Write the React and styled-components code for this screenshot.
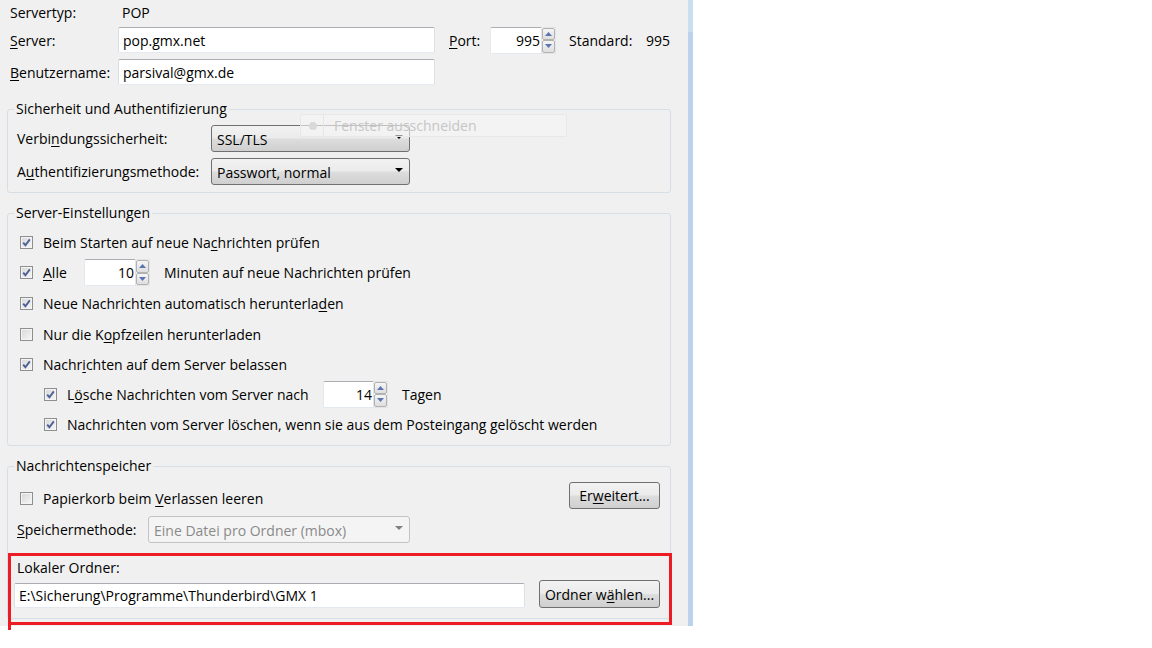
import React from 'react';
import styled, { createGlobalStyle } from 'styled-components';

const FONT = '"Open Sans", "Segoe UI", sans-serif';

const Global = createGlobalStyle`
  html, body { margin: 0; padding: 0; background: #fff; }
  body { font-family: ${FONT}; font-size: 14px; color: #000; }
`;

const Screen = styled.div`
  position: relative;
  display: flex;
  align-items: flex-start;
  width: 1152px;
  height: 648px;
  overflow: hidden;
`;

const Panel = styled.div`
  position: relative;
  width: 688px;
  height: 626px;
  background: #f0f0f0;
  display: flex;
  flex-direction: column;
  overflow: hidden;
`;

const ScrollStrip = styled.div`
  width: 5px;
  height: 626px;
  background: linear-gradient(#cbddf1 0, #cbddf1 32px, #bbd2ea 32px);
`;

const Row = styled.div`
  display: flex;
  align-items: ${p => p.$align || 'center'};
  justify-content: ${p => p.$justify || 'flex-start'};
  align-self: ${p => p.$self || 'auto'};
  height: ${p => p.$h}px;
  margin-top: ${p => p.$mt || 0}px;
  padding-left: ${p => p.$pl || 0}px;
  white-space: nowrap;
`;

const Label = styled.span`
  width: ${p => (p.$w ? `${p.$w}px` : 'auto')};
  flex: none;
  padding-left: ${p => p.$pl || 0}px;
  margin-left: ${p => p.$ml || 0}px;
  box-sizing: border-box;
`;

const U = styled.span`
  text-decoration: underline;
  text-underline-offset: 2px;
`;

const TextInput = styled.div`
  width: ${p => p.$w}px;
  height: ${p => p.$h || 26}px;
  box-sizing: border-box;
  background: #fff;
  border: 1px solid #e3e9ef;
  border-top-color: #abadb3;
  border-left-color: #dbdfe6;
  border-right-color: #dbdfe6;
  border-radius: 2px;
  padding: 0 4px;
  display: flex;
  align-items: center;
  flex: none;
`;

const SpinWrap = styled.div`
  display: flex;
  height: 27px;
  flex: none;
  margin-left: ${p => p.$ml || 0}px;
`;

const SpinInput = styled.div`
  width: ${p => p.$w}px;
  box-sizing: border-box;
  background: #fff;
  border: 1px solid #e3e9ef;
  border-top-color: #abadb3;
  border-right: none;
  border-radius: 2px 0 0 2px;
  display: flex;
  align-items: center;
  justify-content: flex-end;
  padding-right: 1px;
`;

const SpinButtons = styled.div`
  width: 15px;
  box-sizing: border-box;
  display: flex;
  flex-direction: column;
  border: 1px solid #e4e4e4;
  background: #fafafa;
`;

const SpinBtn = styled.div`
  flex: 1;
  box-sizing: border-box;
  border: 1px solid #b2b2b2;
  border-radius: 2px;
  background: linear-gradient(#f5f5f5, #dedede);
  display: flex;
  align-items: center;
  justify-content: center;
`;

const Select = styled.div`
  width: ${p => p.$w}px;
  height: 27px;
  box-sizing: border-box;
  border: 1px solid ${p => (p.$disabled ? '#c3c3c3' : '#707070')};
  border-radius: 3px;
  background: ${p =>
    p.$disabled
      ? '#f4f4f4'
      : 'linear-gradient(#f2f2f2 0%, #ebebeb 48%, #dddddd 52%, #cfcfcf 100%)'};
  color: ${p => (p.$disabled ? '#8a8a8a' : '#000')};
  display: flex;
  align-items: center;
  justify-content: space-between;
  padding: 1px 6px 0 5px;
  flex: none;
`;

const Arrow = styled.span`
  width: 0;
  height: 0;
  border-left: 4px solid transparent;
  border-right: 4px solid transparent;
  border-top: 4px solid ${p => (p.$disabled ? '#808080' : '#000')};
  margin-top: -4px;
`;

const Button = styled.button`
  width: ${p => p.$w}px;
  height: ${p => p.$h || 27}px;
  margin-left: ${p => p.$ml || 0}px;
  box-sizing: border-box;
  border: 1px solid #707070;
  border-radius: 3px;
  background: linear-gradient(#f2f2f2 0%, #ebebeb 48%, #dddddd 52%, #cfcfcf 100%);
  font: inherit;
  color: #000;
  padding: 0;
  flex: none;
`;

const Group = styled.fieldset`
  margin: ${p => p.$mt}px 0 0 7px;
  width: 664px;
  box-sizing: border-box;
  border: 1px solid #d5dfe5;
  border-radius: 3px;
  padding: 0 10px ${p => p.$pb}px 6px;
  min-inline-size: 0;
`;

const Legend = styled.legend`
  padding: 0 2px;
  line-height: 18px;
  height: 18px;
`;

const GroupBody = styled.div`
  display: flex;
  flex-direction: column;
  gap: ${p => p.$gap || 0}px;
  padding-top: ${p => p.$pt}px;
`;

const Box = styled.span`
  width: 13px;
  height: 13px;
  box-sizing: border-box;
  border: 1px solid #8e8f8f;
  background: linear-gradient(135deg, #d8d8d8 0%, #f6f6f6 100%);
  box-shadow: inset 0 0 0 1px #f4f4f4;
  display: flex;
  align-items: center;
  justify-content: center;
  flex: none;
  margin-right: 10px;
`;

const Ghost = styled.div`
  position: absolute;
  left: 300px;
  top: 114px;
  width: 267px;
  height: 23px;
  box-sizing: border-box;
  border: 1px solid #e8e8ea;
  border-radius: 2px;
  background: rgba(245, 245, 246, 0.6);
  display: flex;
  align-items: center;
  color: #c6c6c6;
`;

const GhostDot = styled.span`
  width: 8px;
  height: 8px;
  border-radius: 50%;
  background: #d9d9d9;
  margin-left: 8px;
`;

const GhostSep = styled.span`
  width: 1px;
  height: 21px;
  background: #e6e6e6;
  margin: 0 10px 0 6px;
`;

const RedFrame = styled.div`
  position: absolute;
  left: 8px;
  top: 553px;
  width: 664px;
  height: 72px;
  box-sizing: border-box;
  border: 3px solid #ed1c24;
  &::after {
    content: '';
    position: absolute;
    left: -3px;
    bottom: -8px;
    width: 3px;
    height: 5px;
    background: #ed1c24;
  }
`;

function Check({ on }) {
  return (
    <Box>
      {on && (
        <svg width="9" height="9" viewBox="0 0 9 9">
          <path d="M1.2 4.6 L3.4 7.2 L7.8 1.4" fill="none" stroke="#4b5f96" strokeWidth="1.9" />
        </svg>
      )}
    </Box>
  );
}

function Spin({ value, w, ml }) {
  return (
    <SpinWrap $ml={ml}>
      <SpinInput $w={w}>{value}</SpinInput>
      <SpinButtons>
        <SpinBtn>
          <svg width="7" height="4" viewBox="0 0 7 4"><path d="M0 4 L3.5 0 L7 4Z" fill="#5a74b2" /></svg>
        </SpinBtn>
        <SpinBtn>
          <svg width="7" height="4" viewBox="0 0 7 4"><path d="M0 0 L7 0 L3.5 4Z" fill="#5a74b2" /></svg>
        </SpinBtn>
      </SpinButtons>
    </SpinWrap>
  );
}

export default function App() {
  return (
    <Screen>
      <Global />
      <Panel>
        <Row $h={24} $pl={10}>
          <Label $w={108}>Servertyp:</Label>
          <Label $pl={4}>POP</Label>
        </Row>
        <Row $h={26} $mt={3} $pl={10}>
          <Label $w={108}><U>S</U>erver:</Label>
          <TextInput $w={317}>pop.gmx.net</TextInput>
          <Label $w={41} $ml={14}><U>P</U>ort:</Label>
          <Spin value="995" w={51} />
          <Label $w={77} $ml={13}>Standard:</Label>
          <Label>995</Label>
        </Row>
        <Row $h={26} $mt={6} $pl={10}>
          <Label $w={108}><U>B</U>enutzername:</Label>
          <TextInput $w={317}>parsival@gmx.de</TextInput>
        </Row>

        <Group $mt={15} $pb={7}>
          <Legend>Sicherheit und Authentifizierung</Legend>
          <GroupBody $pt={7} $gap={6}>
            <Row $h={27}>
              <Label $w={197} $pl={3}>Verbi<U>n</U>dungssicherheit:</Label>
              <Select $w={199}>SSL/TLS<Arrow /></Select>
            </Row>
            <Row $h={27}>
              <Label $w={197} $pl={3}>A<U>u</U>thentifizierungsmethode:</Label>
              <Select $w={199}>Passwort, normal<Arrow /></Select>
            </Row>
          </GroupBody>
        </Group>

        <Group $mt={11} $pb={5}>
          <Legend>Server-Einstellungen</Legend>
          <GroupBody $pt={5}>
            <Row $h={30} $pl={6}>
              <Check on />
              <span>Beim Starten auf neue Na<U>c</U>hrichten prüfen</span>
            </Row>
            <Row $h={31} $pl={6}>
              <Check on />
              <Label $w={41}><U>A</U>lle</Label>
              <Spin value="10" w={51} />
              <Label $ml={14}>Minuten auf neue Nachrichten prüfen</Label>
            </Row>
            <Row $h={31} $pl={6}>
              <Check on />
              <span>Neue Nachrichten automatisch herunterla<U>d</U>en</span>
            </Row>
            <Row $h={30} $pl={6}>
              <Check />
              <span>Nur die K<U>o</U>pfzeilen herunterladen</span>
            </Row>
            <Row $h={30} $pl={6}>
              <Check on />
              <span>Nachr<U>i</U>chten auf dem Server belassen</span>
            </Row>
            <Row $h={30} $pl={30}>
              <Check on />
              <Label $w={256}>L<U>ö</U>sche Nachrichten vom Server nach</Label>
              <Spin value="14" w={50} />
              <Label $ml={14}>Tagen</Label>
            </Row>
            <Row $h={31} $pl={30}>
              <Check on />
              <span>Nachrichten vom Server löschen, wenn sie aus dem Postein<U>g</U>ang gelöscht werden</span>
            </Row>
          </GroupBody>
        </Group>

        <Group $mt={11} $pb={10}>
          <Legend>Nachrichtenspeicher</Legend>
          <GroupBody $pt={7}>
            <Row $h={27} $justify="space-between">
              <Row $h={21} $pl={6} $self="flex-end">
                <Check />
                <span>Papierkorb beim <U>V</U>erlassen leeren</span>
              </Row>
              <Button $w={91}>Er<U>w</U>eitert...</Button>
            </Row>
            <Row $h={27} $mt={7}>
              <Label $w={134} $pl={3}><U>S</U>peichermethode:</Label>
              <Select $w={262} $disabled>Eine Datei pro Ordner (mbox)<Arrow $disabled /></Select>
            </Row>
            <Row $h={18} $mt={15}>
              <Label $pl={3}>Lokaler Ordner:</Label>
            </Row>
            <Row $h={28} $mt={4} $align="flex-end">
              <TextInput $w={511} $h={25}>E:\Sicherung\Programme\Thunderbird\GMX 1</TextInput>
              <Button $w={121} $h={28} $ml={14}>Ordner w<U>ä</U>hlen...</Button>
            </Row>
          </GroupBody>
        </Group>

        <Ghost>
          <GhostDot />
          <GhostSep />
          Fenster ausschneiden
        </Ghost>
      </Panel>
      <ScrollStrip />
      <RedFrame />
    </Screen>
  );
}
